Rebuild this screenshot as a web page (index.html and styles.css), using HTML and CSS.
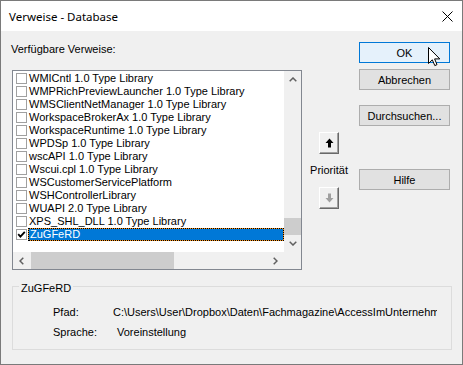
FILE: index.html
```html
<!DOCTYPE html>
<html lang="de">
<head>
<meta charset="utf-8">
<title>Verweise - Database</title>
<link rel="stylesheet" href="styles.css">
</head>
<body>
<div class="win">
  <div class="titlebar">
    <span class="title">Verweise - Database</span>
    <svg class="close" width="11" height="11" viewBox="0 0 11 11"><path d="M0.5 0.5L10.5 10.5M10.5 0.5L0.5 10.5" stroke="#000" stroke-width="1" fill="none"/></svg>
  </div>
  <div class="content">
    <div class="top">
      <div class="left">
        <div class="lbl">Verfügbare Verweise:</div>
        <div class="listbox">
          <div class="items">
            <div class="row"><span class="cb"></span><span class="txt">WMICntl 1.0 Type Library</span></div>
            <div class="row"><span class="cb"></span><span class="txt">WMPRichPreviewLauncher 1.0 Type Library</span></div>
            <div class="row"><span class="cb"></span><span class="txt">WMSClientNetManager 1.0 Type Library</span></div>
            <div class="row"><span class="cb"></span><span class="txt">WorkspaceBrokerAx 1.0 Type Library</span></div>
            <div class="row"><span class="cb"></span><span class="txt">WorkspaceRuntime 1.0 Type Library</span></div>
            <div class="row"><span class="cb"></span><span class="txt">WPDSp 1.0 Type Library</span></div>
            <div class="row"><span class="cb"></span><span class="txt">wscAPI 1.0 Type Library</span></div>
            <div class="row"><span class="cb"></span><span class="txt">Wscui.cpl 1.0 Type Library</span></div>
            <div class="row"><span class="cb"></span><span class="txt">WSCustomerServicePlatform</span></div>
            <div class="row"><span class="cb"></span><span class="txt">WSHControllerLibrary</span></div>
            <div class="row"><span class="cb"></span><span class="txt">WUAPI 2.0 Type Library</span></div>
            <div class="row"><span class="cb"></span><span class="txt">XPS_SHL_DLL 1.0 Type Library</span></div>
            <div class="row sel"><span class="cb"><svg width="9" height="9" viewBox="0 0 9 9"><path d="M1.2 4.2L3.4 6.6L7.8 1.8" stroke="#000" stroke-width="1.8" fill="none"/></svg></span><span class="txt">ZuGFeRD</span></div>
          </div>
          <div class="vscroll">
            <div class="sbtn"><svg width="8" height="5" viewBox="0 0 8 5"><path d="M0.7 4.3L4 1L7.3 4.3" stroke="#606060" stroke-width="1.5" fill="none"/></svg></div>
            <div class="vtrack"><div class="vthumb"></div></div>
            <div class="sbtn"><svg width="8" height="5" viewBox="0 0 8 5"><path d="M0.7 0.7L4 4L7.3 0.7" stroke="#606060" stroke-width="1.5" fill="none"/></svg></div>
          </div>
          <div class="hscroll">
            <div class="hbtn"><svg width="5" height="8" viewBox="0 0 5 8"><path d="M4.3 0.7L1 4L4.3 7.3" stroke="#606060" stroke-width="1.5" fill="none"/></svg></div>
            <div class="htrack"><div class="hthumb"></div></div>
            <div class="hbtn"><svg width="5" height="8" viewBox="0 0 5 8"><path d="M0.7 0.7L4 4L0.7 7.3" stroke="#606060" stroke-width="1.5" fill="none"/></svg></div>
          </div>
          <div class="corner"></div>
        </div>
      </div>
      <div class="mid">
        <div class="arrowbtn"><svg width="9" height="10" viewBox="0 0 9 10"><path d="M4.5 0.5L8.5 5H6V9.5H3V5H0.5Z" fill="#000"/></svg></div>
        <div class="prio">Priorität</div>
        <div class="arrowbtn down"><svg width="9" height="10" viewBox="0 0 9 10"><path d="M4.5 9.5L8.5 5H6V0.5H3V5H0.5Z" fill="#a0a0a0"/></svg></div>
      </div>
      <div class="right">
        <div class="btn ok">OK</div>
        <div class="btn cancel">Abbrechen</div>
        <div class="btn browse">Durchsuchen...</div>
        <div class="btn help">Hilfe</div>
      </div>
    </div>
    <div class="group">
      <div class="legend">ZuGFeRD</div>
      <div class="fields">
        <span>Pfad:</span><span class="val">C:\Users\User\Dropbox\Daten\Fachmagazine\AccessImUnternehmen</span>
        <span>Sprache:</span><span class="val val2">Voreinstellung</span>
      </div>
    </div>
  </div>
  <svg class="cursor" width="13" height="20" viewBox="0 0 13 20"><path d="M0.5 0.5L0.5 16.5L4.3 12.8L6.8 18.6L9 17.6L6.6 11.9L11.8 11.9Z" fill="#fff" stroke="#000" stroke-width="1" stroke-linejoin="miter"/></svg>
</div>
</body>
</html>
```
FILE: styles.css
```css
* { box-sizing: border-box; }
html, body { margin: 0; padding: 0; }
body {
  width: 463px;
  height: 365px;
  overflow: hidden;
  background: #fff;
  font-family: "Liberation Sans", Arial, sans-serif;
  font-size: 11px;
  color: #000;
}
.win {
  position: relative;
  width: 463px;
  height: 365px;
  border: 1px solid #7a7a7a;
  background: #f0f0f0;
  display: flex;
  flex-direction: column;
}
.titlebar {
  height: 30px;
  flex: none;
  background: #fff;
  display: flex;
  align-items: center;
  justify-content: space-between;
  padding: 0 9px 0 8px;
}
.title {
  font-family: "Noto Sans", sans-serif;
  font-size: 11.5px;
}
.close { display: block; }
.content {
  flex: 1;
  padding: 11px 12px 0 11px;
  display: flex;
  flex-direction: column;
}
.top { display: flex; align-items: flex-start; }
.left { width: 290px; flex: none; }
.lbl {
  margin: 1px 0 14px -1px;
  height: 13px;
  line-height: 13px;
  white-space: nowrap;
}
.listbox {
  width: 290px;
  height: 200px;
  border: 1px solid #828790;
  background: #fff;
  display: grid;
  grid-template-columns: 271px 17px;
  grid-template-rows: 181px 17px;
}
.items { overflow: hidden; padding-top: 1px; }
.row {
  height: 13px;
  display: flex;
  white-space: nowrap;
  line-height: 13px;
}
.cb {
  flex: none;
  width: 11px;
  height: 11px;
  margin: 1px 0 0 3px;
  border: 1px solid #a0a0a0;
  background: #fff;
  display: flex;
  align-items: center;
  justify-content: center;
}
.cb svg { display: block; }
.txt { flex: none; margin-left: 1px; padding-left: 1px; }
.row.sel .txt {
  flex: 1;
  padding-left: 1px;
  line-height: 11px;
  color: #fff;
  border: 1px dotted #000;
  background: linear-gradient(#0078d7, #0078d7) padding-box, #f7941d border-box;
}
.vscroll {
  background: #f0f0f0;
  display: flex;
  flex-direction: column;
}
.sbtn {
  height: 17px;
  flex: none;
  display: flex;
  align-items: center;
  justify-content: center;
}
.sbtn svg, .hbtn svg, .arrowbtn svg { display: block; }
.vtrack {
  flex: 1;
  display: flex;
  flex-direction: column;
  justify-content: flex-end;
}
.vthumb { height: 17px; background: #cdcdcd; }
.hscroll { background: #f0f0f0; display: flex; }
.hbtn {
  width: 17px;
  flex: none;
  display: flex;
  align-items: center;
  justify-content: center;
}
.htrack { flex: 1; padding-left: 1px; }
.hthumb { width: 143px; height: 100%; background: #cdcdcd; }
.corner { background: #f0f0f0; }
.mid {
  width: 40px;
  flex: none;
  margin: 90px 0 0 7px;
  display: flex;
  flex-direction: column;
  align-items: center;
}
.arrowbtn {
  width: 20px;
  height: 22px;
  background: #f0f0f0;
  border: 1px solid;
  border-color: #fff #696969 #696969 #fff;
  box-shadow: inset -1px -1px 0 #a0a0a0;
  display: flex;
  align-items: center;
  justify-content: center;
}
.arrowbtn.down { margin-top: 10px; }
.prio { margin-top: 10px; line-height: 13px; white-space: nowrap; }
.right {
  width: 91px;
  flex: none;
  margin-left: 10px;
  display: flex;
  flex-direction: column;
}
.btn {
  height: 21px;
  border: 1px solid #adadad;
  background: #e1e1e1;
  display: flex;
  align-items: center;
  justify-content: center;
  white-space: nowrap;
}
.btn.ok { border-color: #0078d7; background: #e5f1fb; }
.btn.cancel { margin-top: 6px; }
.btn.browse { margin-top: 15px; }
.btn.help { margin-top: 43px; }
.group {
  margin-top: 16px;
  width: 440px;
  height: 64px;
  border: 1px solid #dcdcdc;
}
.legend {
  width: fit-content;
  margin: -5px 0 0 6px;
  padding: 0 2px;
  line-height: 13px;
  background: #f0f0f0;
}
.fields {
  margin: 11px 14px 0 40px;
  display: grid;
  grid-template-columns: 60px minmax(0, 1fr);
  row-gap: 7px;
  line-height: 13px;
}
.val { overflow: hidden; white-space: nowrap; }
.val2 { padding-left: 4px; }
.cursor { position: absolute; left: 427px; top: 46px; display: block; }
```
